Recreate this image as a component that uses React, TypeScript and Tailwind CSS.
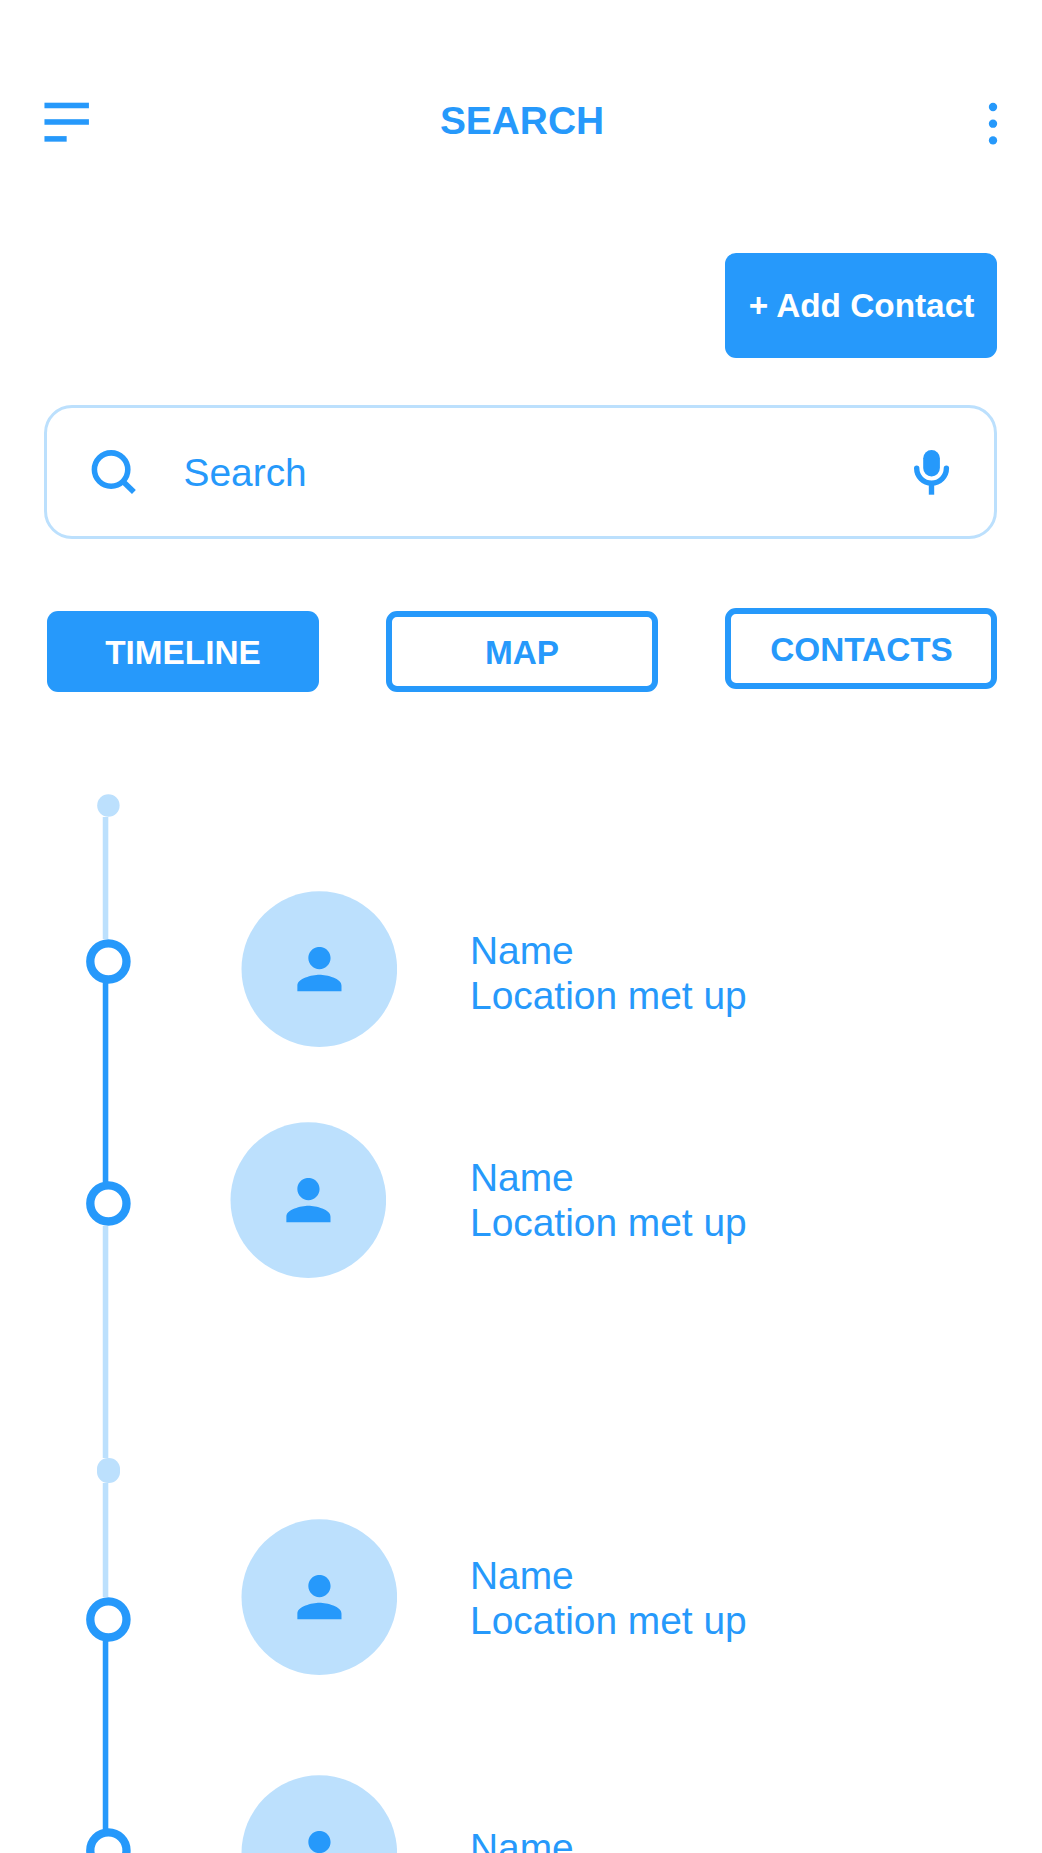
import React from "react";

function MenuIcon() {
  return (
    <svg className="block" width="46" height="42" viewBox="0 0 46 42" fill="#2699FB">
      <rect x="0.46" y="0.7" width="44.46" height="5.56" />
      <rect x="0.46" y="17.2" width="44.46" height="5.56" />
      <rect x="0.46" y="34.1" width="22.2" height="5.56" />
    </svg>
  );
}

function MoreIcon() {
  return (
    <svg className="block" width="10" height="44" viewBox="0 0 10 44" fill="#2699FB">
      <circle cx="5" cy="5" r="4.17" />
      <circle cx="5" cy="21.7" r="4.17" />
      <circle cx="5" cy="38.4" r="4.17" />
    </svg>
  );
}

function SearchIcon() {
  return (
    <svg className="block" width="46" height="46" viewBox="0 0 46 46" fill="none" stroke="#2699FB" strokeWidth="5.56">
      <circle cx="20.1" cy="19.6" r="16.7" />
      <path d="M31.8 31.3 L42.9 42.1" />
    </svg>
  );
}

function MicIcon() {
  return (
    <svg className="block" width="36" height="46" viewBox="0 0 36 46" fill="none" stroke="#2699FB" strokeWidth="5.4">
      <rect x="9.2" y="0" width="16.7" height="26.4" rx="8.34" fill="#2699FB" stroke="none" />
      <path d="M2.7 18.3 A14.85 14.85 0 0 0 32.4 18.3" strokeLinecap="round" />
      <path d="M17.5 33 V44.7" />
    </svg>
  );
}

function Avatar({ className }: { className: string }) {
  return (
    <svg className={`block size-[156px] shrink-0 ${className}`} viewBox="0 0 156 156">
      <circle cx="78.5" cy="78" r="77.8" fill="#BCE0FD" transform="translate(-0.2 0.1)" />
      <svg x="56.2" y="55.9" width="44.5" height="44.5" viewBox="4 4 16 16" fill="#2699FB">
        <path d="M12 12c2.21 0 4-1.79 4-4s-1.79-4-4-4-4 1.79-4 4 1.79 4 4 4zm0 2c-2.67 0-8 1.34-8 4v2h16v-2c0-2.66-5.33-4-8-4z" />
      </svg>
    </svg>
  );
}

function Person({ className }: { className: string }) {
  return (
    <div className={`text-[38.9px] leading-[44.5px] whitespace-nowrap ${className}`}>
      <p>Name</p>
      <p>Location met up</p>
    </div>
  );
}

function Ring() {
  return (
    <svg className="block shrink-0" width="46" height="45" viewBox="0 0 46 45" fill="none">
      <circle cx="22.4" cy="22.4" r="18.1" stroke="#2699FB" strokeWidth="8.34" />
    </svg>
  );
}

function Line({ className }: { className: string }) {
  return (
    <svg className={`ml-[16px] block w-[8px] shrink-0 ${className}`} fill="currentColor">
      <rect x="0.75" y="0" width="5.56" height="100%" />
    </svg>
  );
}

function Dot() {
  return (
    <svg className="ml-[11px] block shrink-0" width="24" height="23" viewBox="0 0 24 23">
      <circle cx="11.4" cy="11.5" r="11.2" fill="#BCE0FD" />
    </svg>
  );
}

export default function App() {
  return (
    <div
      className="flex h-[1853px] w-[1042px] flex-col overflow-hidden bg-white text-[#2699FB]"
      style={{ fontFamily: '"Liberation Sans", Arial, sans-serif' }}
    >
      <header className="mt-[102px] flex h-[44px] shrink-0 items-start justify-between pr-[44px] pl-[44px]">
        <MenuIcon />
        <h1 className="-mt-[4px] ml-[-34px] text-[38.9px] leading-[45px] font-bold">SEARCH</h1>
        <MoreIcon />
      </header>

      <button className="mt-[107px] ml-[725px] flex h-[105px] w-[272px] shrink-0 items-center justify-center rounded-[11px] bg-[#2699FB] pt-px pl-px text-[33.35px] font-bold whitespace-nowrap text-white">
        + Add Contact
      </button>

      <div className="mt-[47px] ml-[44px] flex h-[134px] w-[953px] shrink-0 items-start rounded-[28px] border-3 border-[#BCE0FD] pt-[42px] pl-[44px]">
        <SearchIcon />
        <span className="mt-px ml-[46.5px] text-[38.9px] leading-[44px]">Search</span>
        <div className="mr-[44px] ml-auto">
          <MicIcon />
        </div>
      </div>

      <nav className="mt-[69px] ml-[47px] flex h-[84px] w-[950px] shrink-0 justify-between text-[33.35px] font-bold">
        <button className="mt-[3px] flex h-[81px] w-[272px] items-center justify-center rounded-[11px] bg-[#2699FB] pt-[3px] text-white">
          TIMELINE
        </button>
        <button className="mt-[3px] flex h-[81px] w-[272px] items-center justify-center rounded-[11px] border-6 border-[#2699FB] pt-[3px]">
          MAP
        </button>
        <button className="flex h-[81px] w-[272px] items-center justify-center rounded-[11px] border-6 border-[#2699FB] pt-[3px] pl-px">
          CONTACTS
        </button>
      </nav>

      <main className="mt-[102px] ml-[86px] flex h-[1059px] shrink-0 items-start overflow-hidden">
        <div className="flex w-[46px] shrink-0 flex-col">
          <Dot />
          <Line className="h-[122px] text-[#BCE0FD]" />
          <Ring />
          <Line className="-my-px h-[199px] text-[#2699FB]" />
          <Ring />
          <Line className="h-[232px] text-[#BCE0FD]" />
          <div className="ml-[11px] h-[25px] w-[23px] shrink-0 rounded-[11px] bg-[#BCE0FD]" />
          <Line className="h-[114px] text-[#BCE0FD]" />
          <Ring />
          <Line className="-my-px h-[188px] text-[#2699FB]" />
          <Ring />
        </div>
        <div className="ml-[98px] flex w-[168px] shrink-0 flex-col">
          <Avatar className="mt-[97px] ml-[11px]" />
          <Avatar className="mt-[75px]" />
          <Avatar className="mt-[241px] ml-[11px]" />
          <Avatar className="mt-[100px] ml-[11px]" />
        </div>
        <div className="ml-[72px] flex flex-col">
          <Person className="mt-[135px]" />
          <Person className="mt-[138px]" />
          <Person className="mt-[309px]" />
          <Person className="mt-[183px]" />
        </div>
      </main>
    </div>
  );
}
